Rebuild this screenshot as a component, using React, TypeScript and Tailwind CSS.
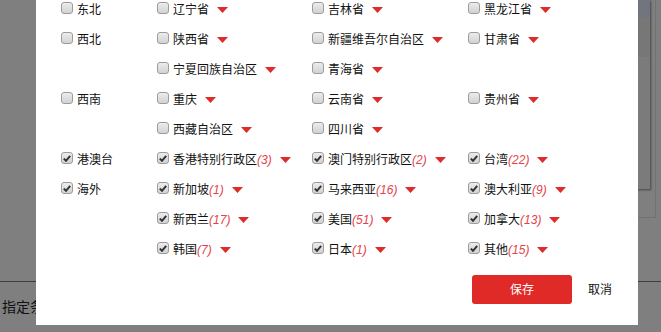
import React from "react";

type Item = { name: string; count?: number; checked?: boolean };
type Row = { region?: string; checked?: boolean; items: Item[] };

const rows: Row[] = [
  { region: "东北", items: [{ name: "辽宁省" }, { name: "吉林省" }, { name: "黑龙江省" }] },
  { region: "西北", items: [{ name: "陕西省" }, { name: "新疆维吾尔自治区" }, { name: "甘肃省" }] },
  { items: [{ name: "宁夏回族自治区" }, { name: "青海省" }] },
  { region: "西南", items: [{ name: "重庆" }, { name: "云南省" }, { name: "贵州省" }] },
  { items: [{ name: "西藏自治区" }, { name: "四川省" }] },
  {
    region: "港澳台",
    checked: true,
    items: [
      { name: "香港特别行政区", count: 3, checked: true },
      { name: "澳门特别行政区", count: 2, checked: true },
      { name: "台湾", count: 22, checked: true },
    ],
  },
  {
    region: "海外",
    checked: true,
    items: [
      { name: "新加坡", count: 1, checked: true },
      { name: "马来西亚", count: 16, checked: true },
      { name: "澳大利亚", count: 9, checked: true },
    ],
  },
  {
    items: [
      { name: "新西兰", count: 17, checked: true },
      { name: "美国", count: 51, checked: true },
      { name: "加拿大", count: 13, checked: true },
    ],
  },
  {
    items: [
      { name: "韩国", count: 7, checked: true },
      { name: "日本", count: 1, checked: true },
      { name: "其他", count: 15, checked: true },
    ],
  },
];

function Box({ checked }: { checked?: boolean }) {
  return (
    <span className="mb-[4px] flex h-[12px] w-[12px] shrink-0 items-center justify-center rounded-[3px] border border-[#9c9c9c] bg-gradient-to-b from-[#ececec] to-[#d2d2d2]">
      {checked && (
        <svg width="8" height="7" viewBox="0 0 8 7">
          <path d="M0.8 3.6 L3 5.8 L7.2 0.9" fill="none" stroke="#333" strokeWidth="2" />
        </svg>
      )}
    </span>
  );
}

function Tri() {
  return (
    <svg className="ml-2 shrink-0" width="11" height="6" viewBox="0 0 11 6">
      <polygon points="0,0 11,0 5.5,6" fill="#e02b2b" />
    </svg>
  );
}

function Cell({ item }: { item: Item }) {
  return (
    <div className="flex h-[30px] items-center">
      <Box checked={item.checked} />
      <span className="ml-[4px] whitespace-nowrap text-[12px] text-[#111]">{item.name}</span>
      {item.count !== undefined && (
        <span className="whitespace-nowrap text-[12px] italic text-[#e3434a]">({item.count})</span>
      )}
      <Tri />
    </div>
  );
}

export default function App() {
  return (
    <div
      className="relative h-[332px] w-[661px] overflow-hidden bg-[#7f7f7f]"
      style={{ fontFamily: '"Liberation Sans", "Noto Sans CJK SC", sans-serif' }}
    >
      {/* dimmed page behind the dialog */}
      <div className="absolute left-0 right-0 top-[281px] h-px bg-[#3e3e3e]" />
      <div className="absolute left-[2px] top-[298px] text-[14px] leading-[18px] text-[#111]">指定条件</div>
      <div className="absolute left-[600px] top-0 h-[218px] w-[56px] border-b border-r border-[#727272]" />
      <div className="absolute left-[600px] top-0 h-[189px] w-[50px] bg-[#7b7b7b] shadow-[1px_1px_2px_rgba(0,0,0,0.45)]">
        <div className="h-[18px] bg-[#71757d]" />
        <div className="h-[39px] bg-[#777777]" />
      </div>

      {/* dialog */}
      <div className="absolute left-[36px] top-0 flex h-[325px] w-[602px] flex-col overflow-hidden bg-white pl-[25px] pr-[26px]">
        <div className="mt-[-5px] grid grid-cols-[96px_155px_156px_1fr]">
          {rows.map((r, i) => (
            <React.Fragment key={i}>
              <div className="flex h-[30px] items-center">
                {r.region && (
                  <>
                    <Box checked={r.checked} />
                    <span className="ml-[4px] text-[12px] text-[#111]">{r.region}</span>
                  </>
                )}
              </div>
              {[0, 1, 2].map((j) => (
                <div key={j}>{r.items[j] && <Cell item={r.items[j]} />}</div>
              ))}
            </React.Fragment>
          ))}
        </div>
        <div className="mt-[10px] flex items-center justify-end">
          <button className="h-[29px] w-[100px] rounded-[3px] bg-[#e02a27] text-[12px] text-white">保存</button>
          <button className="ml-[16px] text-[12px] text-[#111]">取消</button>
        </div>
      </div>
    </div>
  );
}
